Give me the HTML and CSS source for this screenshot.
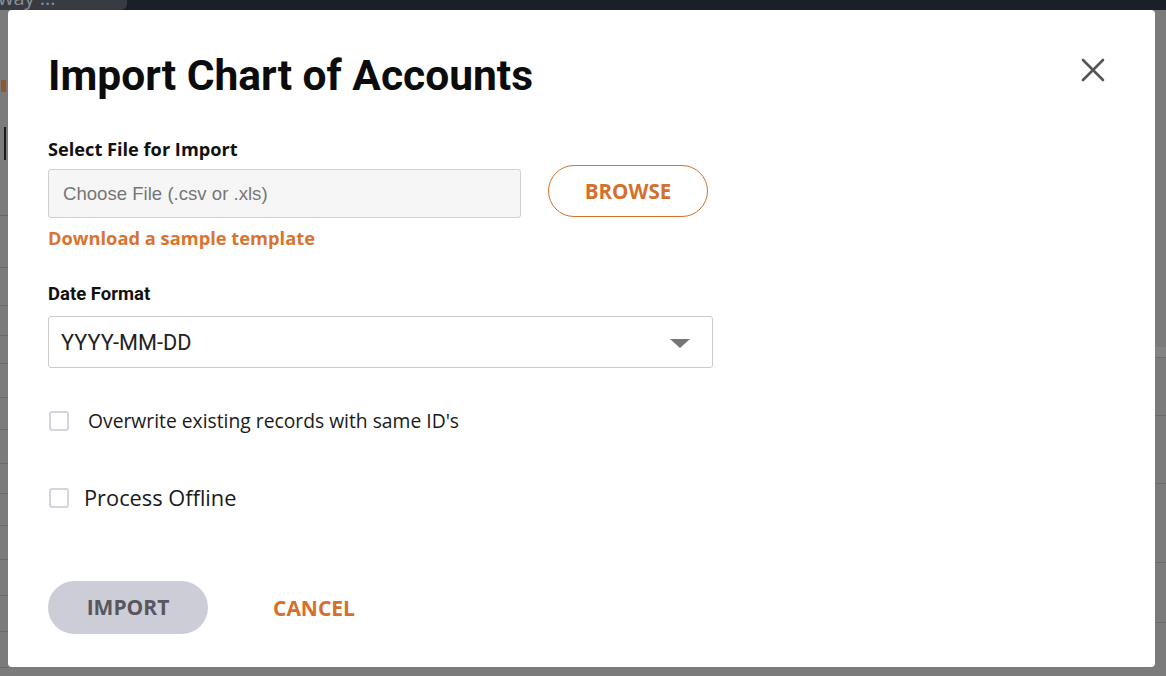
FILE: index.html
```html
<!DOCTYPE html>
<html lang="en">
<head>
    <meta charset="UTF-8">
    <title>Import Chart of Accounts</title>
    <link rel="stylesheet" href="styles.css">
</head>
<body>
<div class="topbar">
    <div class="tab"><span>way ...</span></div>
</div>
<div class="backdrop">
    <div class="side side-left">
        <div class="frag-text"></div>
        <div class="frag-cursor"></div>
        <div class="row row-orange" style="height:56px"></div>
        <div class="row" style="height:52px"></div>
        <div class="row" style="height:38px"></div>
        <div class="row" style="height:30px"></div>
        <div class="row" style="height:28px"></div>
        <div class="row" style="height:34px"></div>
        <div class="row" style="height:32px"></div>
        <div class="row" style="height:34px"></div>
        <div class="row" style="height:30px"></div>
        <div class="row" style="height:32px"></div>
        <div class="row" style="height:34px"></div>
        <div class="row" style="height:36px"></div>
        <div class="row" style="height:36px"></div>
        <div class="row" style="height:36px"></div>
    </div>
    <div class="side side-right">
        <div class="band"></div>
        <div class="row" style="height:58px"></div>
        <div class="row" style="height:68px"></div>
        <div class="row" style="height:79px"></div>
        <div class="row" style="height:60px"></div>
    </div>
</div>

<div class="modal">
    <div class="modal-head">
        <h1>Import Chart of Accounts</h1>
        <a href="javascript:;" class="close">
            <svg width="24" height="24" viewBox="0 0 24 24">
                <path d="M2 2L22 22M22 2L2 22" stroke="#555" stroke-width="2.6" stroke-linecap="round" fill="none"/>
            </svg>
        </a>
    </div>

    <label class="label">Select File for Import</label>
    <div class="file-row">
        <div class="file-input">Choose File (.csv or .xls)</div>
        <a href="javascript:;" class="btn-outline">BROWSE</a>
    </div>
    <a href="javascript:;" class="link">Download a sample template</a>

    <label class="label label-date">Date Format</label>
    <div class="select">
        <span>YYYY-MM-DD</span>
        <i class="caret"></i>
    </div>

    <div class="check check-first">
        <span class="box"></span>
        <span class="check-text">Overwrite existing records with same ID's</span>
    </div>
    <div class="check check-second">
        <span class="box"></span>
        <span class="check-text check-big">Process Offline</span>
    </div>

    <div class="actions">
        <a href="javascript:;" class="btn-import">IMPORT</a>
        <a href="javascript:;" class="btn-cancel">CANCEL</a>
    </div>
</div>
</body>
</html>
```

FILE: styles.css
```css
html,body{
    width: 100%;
    height: 100%;
    overflow: hidden;
}
*{
    margin:0;
    padding:0;
    box-sizing: border-box;
}
a{
    text-decoration: none;
}
body{
    background: #7b7b7b;
    font-family: "Open Sans", "Liberation Sans", sans-serif;
    color: #111;
    position: relative;
}
.topbar{
    height: 10px;
    background: #1b1f29;
    overflow: hidden;
}
.tab{
    width: 127px;
    height: 10px;
    background: #383b42;
    border-bottom-right-radius: 6px;
    overflow: hidden;
}
.tab span{
    display: block;
    margin-top: -14px;
    margin-left: -2px;
    font-size: 20px;
    line-height: 24px;
    color: #8b8e94;
}
.backdrop{
    display: flex;
    justify-content: space-between;
    height: 666px;
}
.side{
    display: flex;
    flex-direction: column;
}
.side-left{
    width: 8px;
    padding-top: 70px;
}
.side-right{
    width: 11px;
    padding-top: 337px;
}
.row{
    border-bottom: 1px solid #6a6a6a;
    flex-shrink: 0;
}
.row-orange{
    border-bottom-color: #8c5a36;
}
.frag-text{
    width: 5px;
    height: 12px;
    margin-left: 1px;
    background: #8e5a30;
}
.frag-cursor{
    width: 2px;
    height: 33px;
    margin-left: 4px;
    margin-top: 35px;
    background: #1a1a1a;
}
.band{
    height: 11px;
    background: #838383;
    border-bottom: 1px solid #6f6f6f;
}

/* dialog */
.modal{
    position: absolute;
    left: 8px;
    top: 10px;
    width: 1147px;
    height: 657px;
    background: #fff;
    border-radius: 4px;
    padding: 41px 50px 0 40px;
    display: flex;
    flex-direction: column;
    align-items: flex-start;
}
.modal-head{
    width: 100%;
    display: flex;
    justify-content: space-between;
    align-items: flex-start;
}
.modal-head h1{
    font-family: Roboto, "Liberation Sans", sans-serif;
    font-weight: 700;
    font-size: 42.5px;
    line-height: 50px;
    color: #0c0c0c;
}
.close{
    display: block;
    width: 24px;
    height: 24px;
    margin-top: 7px;
}
.close svg{
    display: block;
}
.label{
    display: block;
    margin-top: 36px;
    font-size: 18.2px;
    line-height: 24px;
    font-weight: 700;
    color: #111;
}
.label-date{
    margin-top: 32px;
    font-family: Roboto, "Liberation Sans", sans-serif;
    font-size: 18.5px;
}
.file-row{
    display: flex;
    align-items: flex-start;
    margin-top: 4px;
}
.file-input{
    width: 473px;
    height: 49px;
    margin-top: 4px;
    background: #f6f6f7;
    border: 1px solid #cfcfd4;
    border-radius: 3px;
    padding-left: 14px;
    font-family: "Liberation Sans", Arial, sans-serif;
    font-size: 18.6px;
    line-height: 47px;
    color: #767676;
}
.btn-outline{
    display: block;
    width: 160px;
    height: 52px;
    margin-left: 27px;
    border: 1px solid #d4702c;
    border-radius: 26px;
    text-align: center;
    font-size: 20.6px;
    font-weight: 700;
    line-height: 51px;
    color: #d4702c;
}
.link{
    display: block;
    margin-top: 8px;
    font-size: 18.3px;
    line-height: 24px;
    font-weight: 700;
    color: #d9742f;
}
.select{
    width: 665px;
    height: 52px;
    margin-top: 10px;
    border: 1px solid #cbcbcb;
    border-radius: 3px;
    padding: 0 22px 0 12px;
    display: flex;
    align-items: center;
    justify-content: space-between;
    font-family: Roboto, "Liberation Sans", sans-serif;
    font-size: 21.7px;
    color: #222;
}
.caret{
    width: 0;
    height: 0;
    border-left: 10px solid transparent;
    border-right: 10px solid transparent;
    border-top: 9px solid #757575;
    margin-top: 3px;
}
.check{
    display: flex;
    align-items: center;
    height: 24px;
}
.check-first{
    margin-top: 41px;
}
.check-second{
    margin-top: 53px;
}
.box{
    width: 20px;
    height: 20px;
    margin-left: 1px;
    border: 2px solid #d4d4dc;
    border-radius: 3px;
    background: #fff;
}
.check-text{
    margin-left: 19px;
    font-size: 19.3px;
    line-height: 24px;
    color: #1a1a1a;
}
.check-big{
    margin-left: 15px;
    font-size: 21.8px;
}
.actions{
    display: flex;
    align-items: center;
    margin-top: 71px;
}
.btn-import{
    display: block;
    width: 160px;
    height: 53px;
    border-radius: 27px;
    background: #cdcdd8;
    text-align: center;
    font-size: 21px;
    font-weight: 700;
    line-height: 53px;
    color: #57575c;
}
.btn-cancel{
    margin-left: 65px;
    font-size: 21px;
    font-weight: 700;
    color: #d4702c;
}
```
